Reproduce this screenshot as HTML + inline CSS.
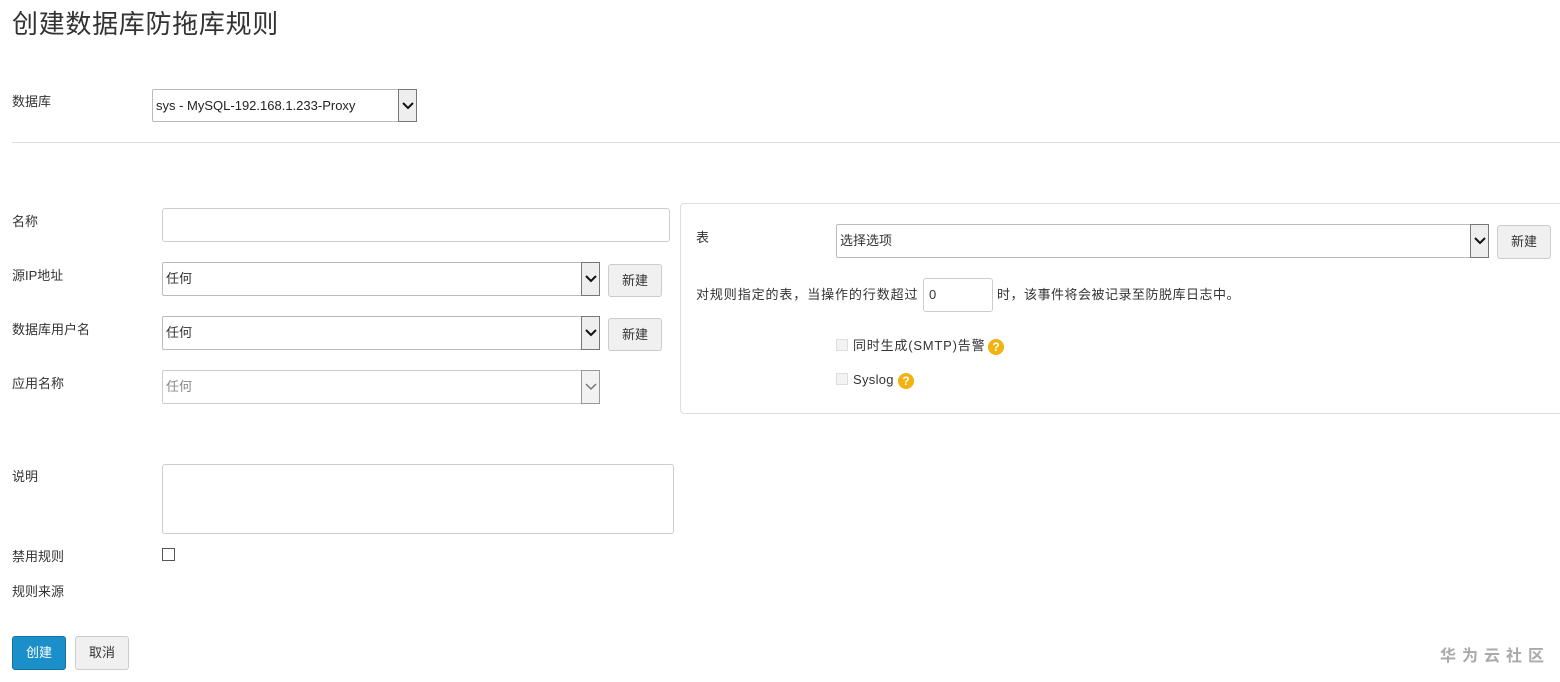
<!DOCTYPE html>
<html><head><meta charset="utf-8"><style>
*{box-sizing:border-box}
body{margin:0;width:1560px;height:682px;background:#fff;font-family:"Liberation Sans","Noto Sans CJK SC",sans-serif;font-size:13px;color:#333;position:relative;overflow:hidden}
.a{position:absolute}
.lbl{position:absolute;left:12px;font-size:13px;line-height:16px}
.box{position:absolute;border:1px solid #ccc;border-radius:3px;background:#fff}
.sel{position:absolute;border:1px solid #bbb;border-radius:2px;background:#fff;font-size:13px;line-height:31px;padding-left:3px}
.arr{position:absolute;right:-1px;top:-1px;bottom:-1px;width:19px;border:1px solid #777;background:#eee;display:flex;align-items:center;justify-content:center}
.btn{position:absolute;border:1px solid #ccc;border-radius:3px;background:#f0f0f0;color:#333;font-size:13px;text-align:center;line-height:31px}
.cb{position:absolute;width:12px;height:12px;border:1px solid #ddd;background:#f3f3f3}
.q{position:absolute;width:16px;height:16px;border-radius:50%;background:#f2b20f;color:#fff;font-weight:bold;font-size:12px;line-height:16px;text-align:center}
</style></head><body>
<div class="a" style="left:12px;top:6px;font-size:26px;line-height:36px;color:#333;letter-spacing:0.7px">创建数据库防拖库规则</div>

<div class="lbl" style="top:94px">数据库</div>
<div class="sel" style="left:152px;top:89px;width:265px;height:33px;color:#222">sys - MySQL-192.168.1.233-Proxy<div class="arr"><svg width="12" height="8"><path d="M1 1L6 6L11 1" stroke="#111" stroke-width="2" fill="none"/></svg></div></div>
<div class="a" style="left:12px;top:142px;width:1548px;height:1px;background:#ddd"></div>

<div class="lbl" style="top:214px">名称</div>
<div class="box" style="left:162px;top:208px;width:508px;height:34px"></div>

<div class="lbl" style="top:268px">源IP地址</div>
<div class="sel" style="left:162px;top:262px;width:438px;height:34px">任何<div class="arr"><svg width="12" height="8"><path d="M1 1L6 6L11 1" stroke="#111" stroke-width="2" fill="none"/></svg></div></div>
<div class="btn" style="left:608px;top:264px;width:54px;height:33px">新建</div>

<div class="lbl" style="top:322px">数据库用户名</div>
<div class="sel" style="left:162px;top:316px;width:438px;height:34px">任何<div class="arr"><svg width="12" height="8"><path d="M1 1L6 6L11 1" stroke="#111" stroke-width="2" fill="none"/></svg></div></div>
<div class="btn" style="left:608px;top:318px;width:54px;height:33px">新建</div>

<div class="lbl" style="top:376px">应用名称</div>
<div class="sel" style="left:162px;top:370px;width:438px;height:34px;color:#888;border-color:#ccc">任何<div class="arr" style="border-color:#999;background:#f2f2f2"><svg width="12" height="8"><path d="M1 1L6 6L11 1" stroke="#777" stroke-width="1.5" fill="none"/></svg></div></div>

<div class="a" style="left:680px;top:203px;width:890px;height:211px;border:1px solid #ddd;border-radius:4px"></div>
<div class="a" style="left:696px;top:230px;line-height:16px">表</div>
<div class="sel" style="left:836px;top:224px;width:653px;height:34px">选择选项<div class="arr"><svg width="12" height="8"><path d="M1 1L6 6L11 1" stroke="#111" stroke-width="2" fill="none"/></svg></div></div>
<div class="btn" style="left:1497px;top:225px;width:54px;height:34px">新建</div>
<div class="a" style="left:696px;top:287px;line-height:16px;letter-spacing:0.9px">对规则指定的表，当操作的行数超过</div>
<div class="box" style="left:923px;top:278px;width:70px;height:34px;padding:8px 0 0 5px;line-height:16px">0</div>
<div class="a" style="left:997px;top:287px;line-height:16px;letter-spacing:0.5px">时，该事件将会被记录至防脱库日志中。</div>
<div class="cb" style="left:836px;top:339px"></div>
<div class="a" style="left:853px;top:338px;line-height:16px;letter-spacing:0.8px">同时生成(SMTP)告警</div>
<div class="q" style="left:988px;top:339px">?</div>
<div class="cb" style="left:836px;top:373px"></div>
<div class="a" style="left:853px;top:372px;line-height:16px;letter-spacing:0.3px">Syslog</div>
<div class="q" style="left:898px;top:373px">?</div>

<div class="lbl" style="top:469px">说明</div>
<div class="box" style="left:162px;top:464px;width:512px;height:70px"></div>

<div class="lbl" style="top:549px">禁用规则</div>
<div class="a" style="left:162px;top:548px;width:13px;height:13px;border:1px solid #555;background:#fff"></div>
<div class="lbl" style="top:584px">规则来源</div>

<div class="a" style="left:12px;top:636px;width:54px;height:34px;background:#1a8fc9;border:1px solid #14739f;border-radius:3px;color:#fff;text-align:center;line-height:32px">创建</div>
<div class="btn" style="left:75px;top:636px;width:54px;height:34px">取消</div>

<div class="a" style="left:1440px;top:647px;color:#aaa;font-size:16px;font-weight:bold;letter-spacing:6px;line-height:20px">华为云社区</div>
</body></html>
